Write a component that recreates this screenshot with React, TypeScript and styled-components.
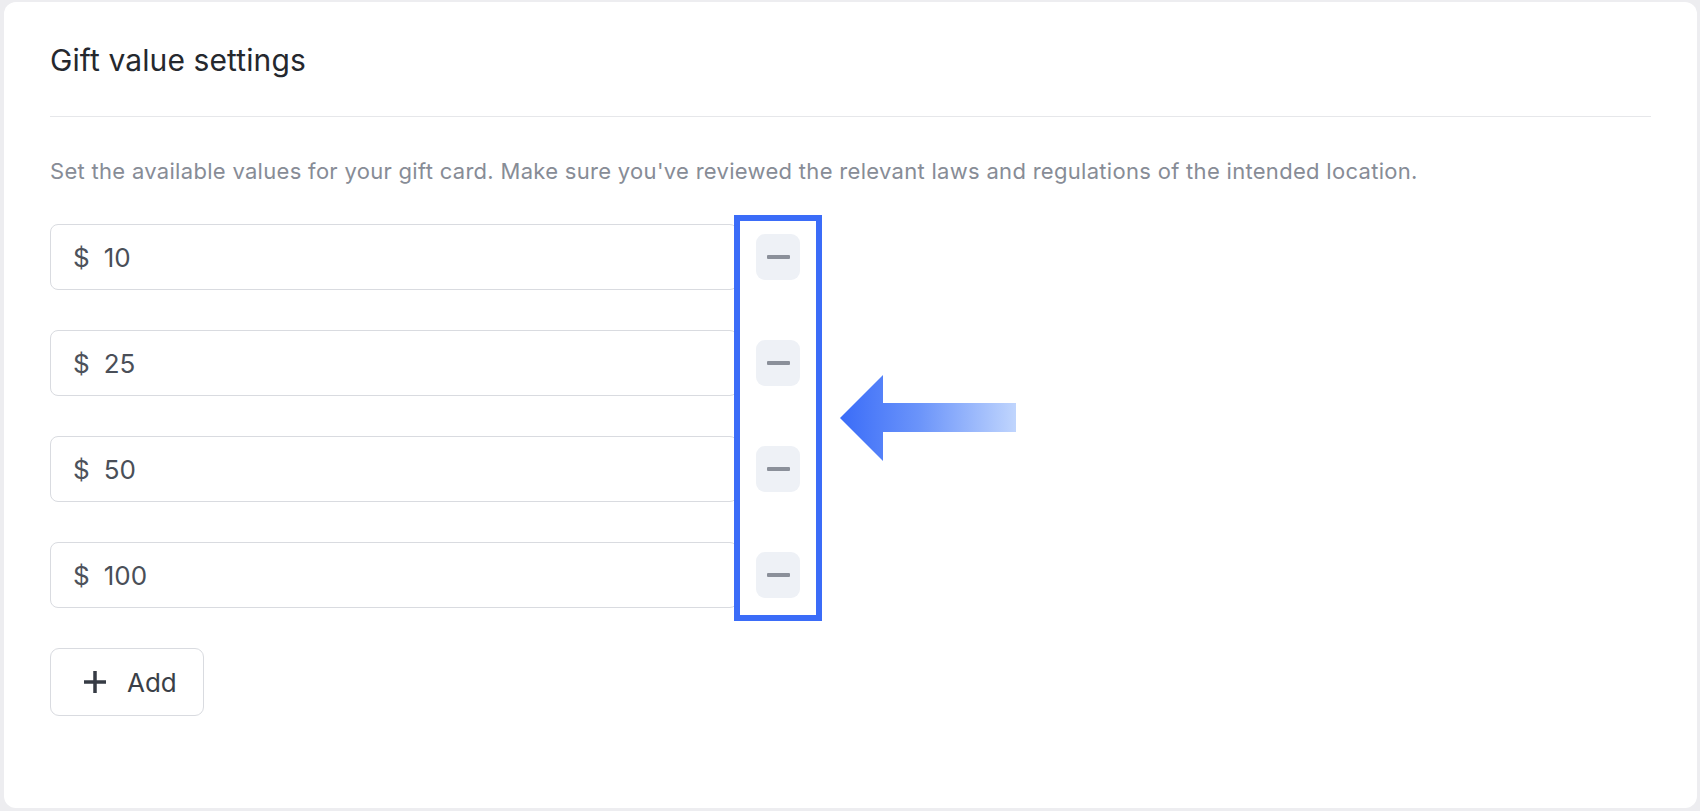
import styled, { createGlobalStyle } from "styled-components";

const GlobalStyle = createGlobalStyle`
	html, body {
		margin: 0;
		padding: 0;
		background: #ededf0;
		font-family: "Inter", "Liberation Sans", sans-serif;
	}
	* {
		box-sizing: border-box;
	}
`;

const values = ["10", "25", "50", "100"];

export default function App() {
	return (
		<>
			<GlobalStyle />
			<Card>
				<Header>
					<Title>Gift value settings</Title>
				</Header>
				<Description>
					Set the available values for your gift card. Make sure you've reviewed the relevant
					laws and regulations of the intended location.
				</Description>
				<Rows>
					{values.map((v) => (
						<Row key={v}>
							<AmountInput>
								<Currency>$</Currency>
								<Amount>{v}</Amount>
							</AmountInput>
							<RemoveButton aria-label="Remove value">
								<Dash />
							</RemoveButton>
						</Row>
					))}
					<Highlight />
					<Arrow width="176" height="86" viewBox="0 0 176 86">
						<defs>
							<linearGradient id="arrowFill" x1="0" y1="0" x2="1" y2="0">
								<stop offset="0" stopColor="#3a6cf8" />
								<stop offset="0.45" stopColor="#6b94fa" />
								<stop offset="1" stopColor="#c0d5fd" />
							</linearGradient>
						</defs>
						<path d="M0 43 L43 0 L43 28 L176 28 L176 57 L43 57 L43 86 Z" fill="url(#arrowFill)" />
					</Arrow>
				</Rows>
				<AddButton>
					<svg width="24" height="24" viewBox="0 0 24 24">
						<path d="M12 1 V23 M1 12 H23" stroke="#363b44" strokeWidth="3.5" />
					</svg>
					<span>Add</span>
				</AddButton>
			</Card>
		</>
	);
}

const Card = styled.div`
	margin: 2px 3px 0 4px;
	height: 806px;
	background: #ffffff;
	border-radius: 12px;
	padding: 0 46px;
	display: flex;
	flex-direction: column;
	align-items: flex-start;
`;

const Header = styled.div`
	width: 100%;
	padding-top: 40px;
	height: 115px;
	border-bottom: 1px solid #e6e7ea;
`;

const Title = styled.h2`
	margin: 0;
	font-size: 30px;
	line-height: 36px;
	font-weight: 400;
	letter-spacing: 0.1px;
	color: #25282e;
`;

const Description = styled.p`
	margin: 41px 0 0;
	font-size: 22px;
	line-height: 26px;
	letter-spacing: 0.3px;
	color: #878c96;
`;

const Rows = styled.div`
	position: relative;
	margin-top: 40px;
	display: flex;
	flex-direction: column;
	gap: 40px;
`;

const Row = styled.div`
	display: flex;
	align-items: center;
	gap: 18px;
`;

const AmountInput = styled.div`
	width: 688px;
	height: 66px;
	border: 1px solid #d9dbe0;
	border-radius: 8px;
	display: flex;
	align-items: center;
	padding-left: 22px;
	gap: 14px;
	font-size: 26px;
	color: #4a4f58;
`;

const Currency = styled.span`
	color: #4d525b;
`;

const Amount = styled.span``;

const RemoveButton = styled.button`
	width: 44px;
	height: 46px;
	border: none;
	border-radius: 9px;
	background: #eef1f6;
	display: flex;
	align-items: center;
	justify-content: center;
	padding: 0;
`;

const Dash = styled.span`
	width: 23px;
	height: 4px;
	background: #8b909a;
	border-radius: 1px;
`;

const Highlight = styled.div`
	position: absolute;
	left: 684px;
	top: -9px;
	width: 88px;
	height: 406px;
	border: 6px solid #3b6cf8;
	pointer-events: none;
`;

const Arrow = styled.svg`
	position: absolute;
	left: 790px;
	top: 151px;
`;

const AddButton = styled.button`
	margin-top: 40px;
	width: 154px;
	height: 68px;
	border: 1px solid #d9dbe0;
	border-radius: 9px;
	background: #ffffff;
	display: flex;
	align-items: center;
	gap: 20px;
	padding: 0 0 0 32px;
	font-family: "Inter", "Liberation Sans", sans-serif;
	font-size: 26px;
	color: #3a3f48;
`;
